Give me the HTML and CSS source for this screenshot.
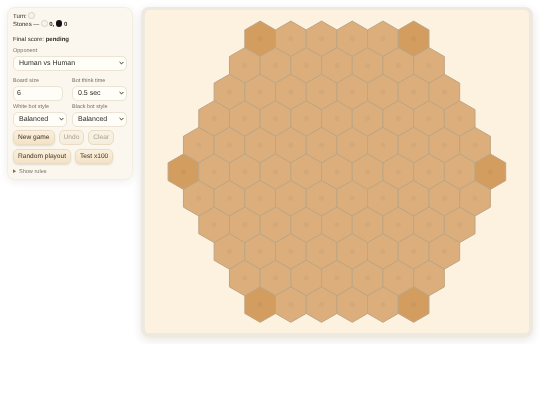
FILE: index.html
```html
<!DOCTYPE html>
<html lang="en">
<head>
  <meta charset="UTF-8" />
  <title>Hex</title>
  <link rel="stylesheet" href="styles.css">
</head>
<body>
  <div class="app">

    <!-- Controls -->
    <aside class="panel">
      <div class="status">Turn: <span class="stone stone-white"></span></div>
      <div class="status">Stones — <span class="stone stone-white"></span> <b>0,</b> <span class="stone stone-black"></span> <b>0</b></div>
      <div class="score">Final score: <b>pending</b></div>

      <label class="field">
        <span class="field-label">Opponent</span>
        <select><option>Human vs Human</option></select>
      </label>

      <div class="field-row">
        <label class="field">
          <span class="field-label">Board size</span>
          <input class="size-input" type="text" value="6">
        </label>
        <label class="field">
          <span class="field-label">Bot think time</span>
          <select><option>0.5 sec</option></select>
        </label>
      </div>

      <div class="field-row">
        <label class="field">
          <span class="field-label">White bot style</span>
          <select><option>Balanced</option></select>
        </label>
        <label class="field">
          <span class="field-label">Black bot style</span>
          <select><option>Balanced</option></select>
        </label>
      </div>

      <div class="buttons">
        <button>New game</button>
        <button disabled>Undo</button>
        <button disabled>Clear</button>
        <button>Random playout</button>
        <button>Test x100</button>
      </div>

      <details class="rules">
        <summary>Show rules</summary>
      </details>
    </aside>

    <!-- Board -->
    <main class="board">
      <svg id="board" width="384" height="323" viewBox="0 0 384 323"></svg>
    </main>
  </div>
  <script src="board.js"></script>
</body>
</html>
```

FILE: styles.css
```css
/* Reset & Base */
* { margin: 0; padding: 0; box-sizing: border-box; }
body {
  font-family: 'Liberation Sans', Arial, sans-serif;
  color: #2f2a22;
  background: #fff;
  font-size: 6px;
  line-height: 8px;
  text-rendering: geometricPrecision;
}

.app {
  display: flex;
  align-items: flex-start;
  gap: 7.5px;
  padding: 7px;
}

/* Controls */
.panel {
  width: 126px;
  height: 172.5px;
  padding: 4px 5px;
  flex: none;
  background: #fbf7ee;
  border: 1px solid #f3eee3;
  border-radius: 8px;
  box-shadow: 0 2px 8px rgba(60,40,10,0.08);
  will-change: transform;
}
.status { height: 8px; white-space: nowrap; }
.score { margin-top: 8px; height: 8px; }
.stone {
  display: inline-block;
  width: 6.5px; height: 6.5px;
  border-radius: 50%;
  vertical-align: -1px;
}
.stone-white { background: #f6f3ea; border: 1px solid #d8d3c8; }
.stone-black { background: #111; }

.field { display: block; min-width: 0; }
.field-label {
  display: block;
  font-size: 5.5px;
  line-height: 8px;
  color: #7a7264;
  margin-bottom: 1.5px;
}
.score + .field { margin-top: 2.5px; }
.field-row {
  display: grid;
  grid-template-columns: 54px 55px;
  gap: 5px;
  margin-top: 2px;
}
.field + .field-row { margin-top: 6px; }
select, .size-input {
  display: block;
  width: 100%;
  height: 14.5px;
  font-family: inherit;
  font-size: 7px;
  color: #2f2a22;
  border: 1px solid #ebe3d3;
  border-radius: 5px;
  padding: 0 9px 0 5px;
  text-rendering: geometricPrecision;
}
select {
  appearance: none;
  background: #fffdf8 url("data:image/svg+xml,%3Csvg xmlns='http://www.w3.org/2000/svg' width='5' height='4' viewBox='0 0 5 4'%3E%3Cpath d='M.6 1l1.9 1.9L4.4 1' fill='none' stroke='%23332c22' stroke-width='1'/%3E%3C/svg%3E") no-repeat right 2px center;
}
.size-input { width: 50px; padding: 0 3px; background: #fffdf8; }

.buttons {
  display: flex;
  flex-wrap: wrap;
  gap: 4px;
  margin-top: 3px;
}
button {
  height: 15px;
  padding: 0 4px;
  font-family: inherit;
  font-size: 6.6px;
  color: #3a3226;
  background: linear-gradient(#fbf0dc, #f3e2c6);
  border: 1px solid #eadcc4;
  border-radius: 5px;
  box-shadow: 0 1px 2px rgba(90,60,20,0.15);
  text-rendering: geometricPrecision;
}
button:disabled {
  color: #a89f90;
  background: linear-gradient(#f9f3e6, #f5ecdb);
  box-shadow: none;
}

.rules {
  margin-top: 4px;
  font-size: 5.6px;
  line-height: 8px;
  color: #7a7264;
}

/* Board */
.board {
  flex: none;
  width: 392px;
  height: 330px;
  background: #fdf1df;
  border: 4px solid #eee9e0;
  border-top-width: 3px;
  border-radius: 8px;
  box-shadow: 0 3px 10px rgba(60,40,10,0.12);
}
#board { display: block; }
.cell { fill: #dcae7c; stroke: #bda684; stroke-width: 1; }
.cell-corner { fill: #d29d5f; }
.cell-dot { fill: #d5a877; }
.cell-corner-dot { fill: #ca985f; }
```

FILE: board.js
```js
// hex board, side 6 => 11 rows
const svg = document.getElementById('board');
const NS = 'http://www.w3.org/2000/svg';
const side = 6;
const R = 17.72;
const W = Math.sqrt(3) * R;
const cx = 191.9, cy = 161.7;

function hexPoints(x, y) {
  const pts = [];
  for (let i = 0; i < 6; i++) {
    const a = Math.PI / 3 * i + Math.PI / 6;
    pts.push((x + R * Math.cos(a)).toFixed(2) + ',' + (y + R * Math.sin(a)).toFixed(2));
  }
  return pts.join(' ');
}

for (let r = -(side - 1); r <= side - 1; r++) {
  const count = 2 * side - 1 - Math.abs(r);
  for (let i = 0; i < count; i++) {
    const x = cx + (i - (count - 1) / 2) * W;
    const y = cy + r * R * 1.5;
    const corner = (i === 0 || i === count - 1) && (Math.abs(r) === side - 1 || r === 0);
    const hex = document.createElementNS(NS, 'polygon');
    hex.setAttribute('points', hexPoints(x, y));
    hex.setAttribute('class', corner ? 'cell cell-corner' : 'cell');
    svg.appendChild(hex);
    const dot = document.createElementNS(NS, 'circle');
    dot.setAttribute('cx', x);
    dot.setAttribute('cy', y);
    dot.setAttribute('r', 2.5);
    dot.setAttribute('class', corner ? 'cell-corner-dot' : 'cell-dot');
    svg.appendChild(dot);
  }
}
```
